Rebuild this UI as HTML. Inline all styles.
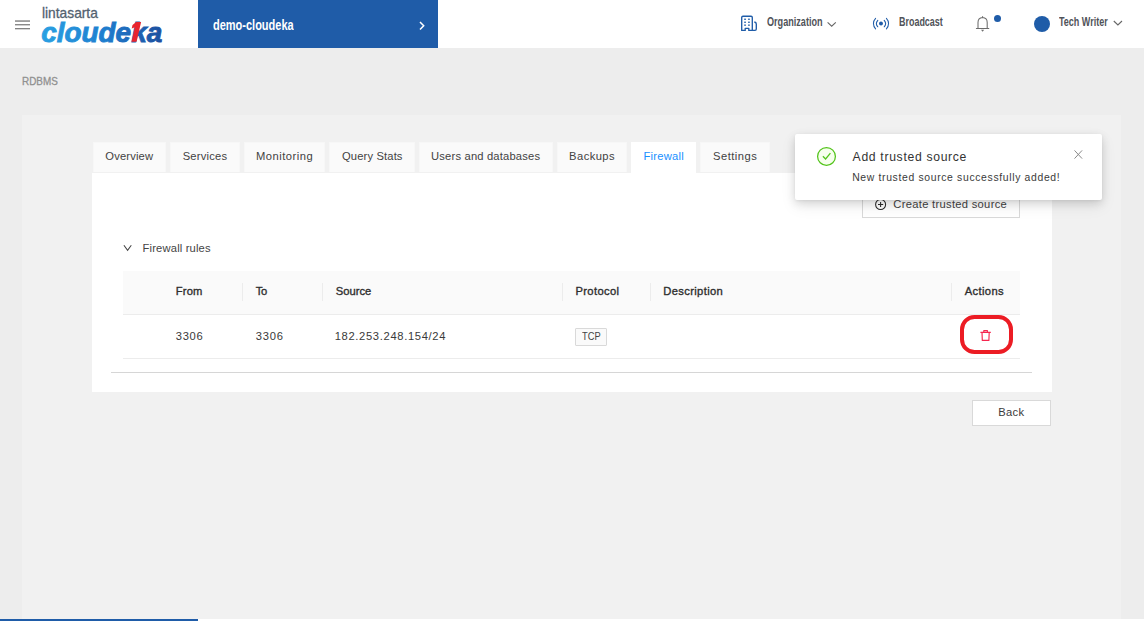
<!DOCTYPE html>
<html>
<head>
<meta charset="utf-8">
<title>RDBMS - Firewall</title>
<style>
*{box-sizing:border-box;margin:0;padding:0}
html,body{width:1144px;height:621px;overflow:hidden}
body{background:#ededed;font-family:"Liberation Sans",sans-serif;position:relative}
.abs,.t,.tab,.sep,svg{position:absolute}
.t{white-space:nowrap;font-family:"Liberation Sans",sans-serif}
#header{left:0;top:0;width:1144px;height:48px;background:#fff}
#proj{left:198px;top:0;width:240px;height:48px;background:#1f5ca8}
#panel{left:22px;top:115px;width:1099px;height:504px;background:#f1f1f1}
#card{left:92px;top:173px;width:960px;height:219px;background:#fff}
.tab{top:142px;height:30px;background:#fafafa;border:1px solid #f7f7f7;border-bottom:none}
.tab.active{background:#fff;height:31px;border-color:#fff}
#thead{left:123px;top:271px;width:897px;height:43px;background:#fafafa}
#theadline{left:123px;top:314px;width:897px;height:1px;background:#ececec}
.sep{top:283px;width:1px;height:18px;background:#ececec}
#rowline{left:123px;top:358px;width:897px;height:1px;background:#ececec}
#hr{left:111px;top:372px;width:921px;height:1px;background:#d6d6d6}
#toast{left:795px;top:134px;width:307px;height:66px;background:#fff;border-radius:2px;box-shadow:0 3px 10px rgba(0,0,0,.12),0 6px 16px rgba(0,0,0,.08),0 1px 3px rgba(0,0,0,.05)}
</style>
</head>
<body>
<div id="header" class="abs"></div>
<svg style="left:14px;top:18px" width="18" height="14" viewBox="0 0 18 14"><g fill="#757575"><rect x="1" y="2.4" width="15" height="1.3"/><rect x="1" y="6.15" width="15" height="1.2"/><rect x="1" y="10.1" width="15" height="1.2"/></g></svg>

<svg id="logo" style="left:36px;top:18px" width="134" height="28" viewBox="36 18 134 28">
<defs><linearGradient id="lg" gradientUnits="userSpaceOnUse" x1="42" y1="0" x2="162" y2="0"><stop offset="0" stop-color="#2aa0e2"/><stop offset=".5" stop-color="#1f7fd0"/><stop offset="1" stop-color="#1d4f9f"/></linearGradient></defs>
<text x="41.2" y="41.5" font-family="Liberation Sans, sans-serif" font-size="28.2" font-weight="bold" font-style="italic" fill="url(#lg)" stroke="url(#lg)" stroke-width=".9" textLength="121" lengthAdjust="spacingAndGlyphs">cloudeka</text>
<path d="M136.3 22 H141.1 L136.6 41.7 H131.6 L134.9 27.2 L131.7 28.6 L132.5 25 Z" fill="#e8242e"/>
</svg>

<div id="proj" class="abs"></div>
<svg style="left:416px;top:19px" width="12" height="14" viewBox="0 0 12 14"><path d="M4 3 L7.7 6.8 L4 10.6" fill="none" stroke="#fff" stroke-width="1.5"/></svg>

<!-- organization icon -->
<svg style="left:739px;top:13px" width="20" height="20" viewBox="739 13 20 20"><g fill="none" stroke="#1f5ca8" stroke-width="1.35" stroke-linejoin="round"><path d="M741.7 30.4 V17.6 Q741.7 16.3 743 16.3 H751 Q752.3 16.3 752.3 17.6 V30.4 H748.8 V28.4 H745.2 V30.4 Z"/><path d="M752.3 30.4 H755 Q756.3 30.4 756.3 29.1 V24 Q756.3 22.3 754.3 22"/></g><g fill="#1f5ca8"><rect x="744.2" y="18.6" width="1.7" height="1.3"/><rect x="748.1" y="18.6" width="1.7" height="1.3"/><rect x="744.2" y="21.6" width="1.7" height="1.3"/><rect x="748.1" y="21.6" width="1.7" height="1.3"/><rect x="744.2" y="24.5" width="1.7" height="1.3"/><rect x="748.1" y="24.5" width="1.7" height="1.3"/></g></svg>
<svg style="left:825px;top:19px" width="14" height="10" viewBox="825 19 14 10"><path d="M827.6 22.4 L831.7 26.2 L835.8 22.4" fill="none" stroke="#666" stroke-width="1.1"/></svg>

<!-- broadcast icon -->
<svg style="left:870px;top:14px" width="22" height="20" viewBox="870 14 22 20"><g fill="none" stroke="#1f5ca8" stroke-width="1.05" stroke-linecap="round"><path d="M877.8 20.3 A4.9 4.9 0 0 0 877.8 26.8"/><path d="M884.2 20.3 A4.9 4.9 0 0 1 884.2 26.8"/><path d="M875.6 18.3 A7.6 7.6 0 0 0 875.6 28.9"/><path d="M886.4 18.3 A7.6 7.6 0 0 1 886.4 28.9"/></g><circle cx="881" cy="23.55" r="1.95" fill="#1f5ca8"/></svg>

<!-- bell -->
<svg style="left:973px;top:13px" width="20" height="22" viewBox="973 13 20 22"><g fill="none" stroke="#6c6c6c" stroke-width="1.05" stroke-linejoin="round" stroke-linecap="round"><path d="M976.4 28.5 H988.8 M978 28.5 V22.5 Q978 18 982.6 17.6 Q987.2 18 987.2 22.5 V28.5 M982.6 17.5 V16.4"/></g><path d="M981 29.8 H984.2 L982.6 31.7 Z" fill="#707070"/></svg>
<div class="abs" style="left:994px;top:15px;width:7.4px;height:7.4px;border-radius:50%;background:#1f5ca8"></div>
<div class="abs" style="left:1034.4px;top:15.7px;width:16.1px;height:16.1px;border-radius:50%;background:#1f5ca8"></div>
<svg style="left:1111px;top:18px" width="14" height="10" viewBox="1111 18 14 10"><path d="M1113.8 21 L1117.9 24.9 L1122 21" fill="none" stroke="#666" stroke-width="1.1"/></svg>

<div id="panel" class="abs"></div>
<div id="card" class="abs"></div>
<div class="tab" style="left:93px;width:73px"></div>
<div class="tab" style="left:170px;width:70px"></div>
<div class="tab" style="left:244px;width:81px"></div>
<div class="tab" style="left:329px;width:86px"></div>
<div class="tab" style="left:419px;width:134px"></div>
<div class="tab" style="left:557px;width:70px"></div>
<div class="tab active" style="left:631px;width:65px"></div>
<div class="tab" style="left:700px;width:70px"></div>

<div class="abs" style="left:862px;top:190px;width:158px;height:28px;border:1px solid #d9d9d9;background:#fff"></div>
<svg style="left:873px;top:197px" width="16" height="16" viewBox="873 197 16 16"><circle cx="880.6" cy="204.5" r="5" fill="none" stroke="#2a2a2a" stroke-width="1.05"/><path d="M878 204.5 H883.2 M880.6 201.9 V207.1" stroke="#2a2a2a" stroke-width="1.05" fill="none"/></svg>

<svg style="left:120px;top:242px" width="16" height="12" viewBox="120 242 16 12"><path d="M123.9 245.3 L127.6 250.4 L131.3 245.3" fill="none" stroke="#444" stroke-width="1.05"/></svg>

<div id="thead" class="abs"></div>
<div id="theadline" class="abs"></div>
<div class="sep" style="left:242px"></div>
<div class="sep" style="left:322px"></div>
<div class="sep" style="left:562px"></div>
<div class="sep" style="left:650px"></div>
<div class="sep" style="left:951px"></div>

<div class="abs" style="left:575px;top:328px;width:32px;height:18px;border:1px solid #d9d9d9;background:#fafafa;border-radius:1px"></div>
<div id="rowline" class="abs"></div>
<div id="hr" class="abs"></div>

<div class="abs" style="left:959.9px;top:314.7px;width:53.4px;height:39.4px;border:4.9px solid #ec1c24;border-radius:14.5px"></div>
<svg style="left:978px;top:328px" width="16" height="16" viewBox="978 328 16 16"><g fill="none" stroke="#f5264f" stroke-width="1.15" stroke-linejoin="round"><path d="M980.4 332.3 H990.8 M982 332.3 L982.3 340.4 H988.9 L989.2 332.3 M983.8 332 V330.6 H987.4 V332"/></g></svg>

<div class="abs" style="left:972px;top:400px;width:79px;height:26px;border:1px solid #d9d9d9;background:#fff"></div>

<div id="toast" class="abs"></div>
<svg style="left:815px;top:145px" width="24" height="24" viewBox="815 145 24 24"><circle cx="826.5" cy="156.4" r="8.9" fill="#f6ffed" stroke="#52c41a" stroke-width="1.25"/><path d="M822.9 156.2 L825.6 159 L830.4 153.2" fill="none" stroke="#52c41a" stroke-width="1.25"/></svg>
<svg style="left:1072px;top:148px" width="14" height="14" viewBox="1072 148 14 14"><path d="M1074.5 150.4 L1082.1 158.6 M1082.1 150.4 L1074.5 158.6" stroke="#8a8a8a" stroke-width="1" fill="none"/></svg>

<div class="t" style="left:212.8px;top:11.0px;font-size:14px;line-height:28px;font-weight:bold;color:#fff;transform:scaleX(0.7854);transform-origin:0 50%;">demo-cloudeka</div>
<div class="t" style="left:766.7px;top:9.9px;font-size:12px;line-height:24px;font-weight:bold;color:#505359;transform:scaleX(0.7575);transform-origin:0 50%;">Organization</div>
<div class="t" style="left:899.3px;top:9.9px;font-size:12px;line-height:24px;font-weight:bold;color:#505359;transform:scaleX(0.7458);transform-origin:0 50%;">Broadcast</div>
<div class="t" style="left:1058.9px;top:9.9px;font-size:12px;line-height:24px;font-weight:bold;color:#505359;transform:scaleX(0.7508);transform-origin:0 50%;">Tech Writer</div>
<div class="t" style="left:22.3px;top:70.0px;font-size:11px;line-height:22px;font-weight:normal;color:#909090;transform:scaleX(0.9000);transform-origin:0 50%;-webkit-text-stroke:.3px currentColor;">RDBMS</div>
<div class="t" style="left:42.0px;top:-1.2px;font-size:14.5px;line-height:29px;font-weight:normal;color:#52616f;transform:scaleX(0.9492);transform-origin:0 50%;-webkit-text-stroke:.3px currentColor;">lintasarta</div>
<div class="t" style="left:105.3px;top:145.3px;font-size:11.2px;line-height:22px;font-weight:normal;color:#424242;letter-spacing:0.157px;">Overview</div>
<div class="t" style="left:182.7px;top:145.3px;font-size:11.2px;line-height:22px;font-weight:normal;color:#424242;letter-spacing:0.214px;">Services</div>
<div class="t" style="left:256.0px;top:145.3px;font-size:11.2px;line-height:22px;font-weight:normal;color:#424242;letter-spacing:0.500px;">Monitoring</div>
<div class="t" style="left:342.0px;top:145.3px;font-size:11.2px;line-height:22px;font-weight:normal;color:#424242;letter-spacing:0.140px;">Query Stats</div>
<div class="t" style="left:431.1px;top:145.3px;font-size:11.2px;line-height:22px;font-weight:normal;color:#424242;letter-spacing:0.178px;">Users and databases</div>
<div class="t" style="left:569.1px;top:145.3px;font-size:11.2px;line-height:22px;font-weight:normal;color:#424242;letter-spacing:0.433px;">Backups</div>
<div class="t" style="left:643.4px;top:145.3px;font-size:11.2px;line-height:22px;font-weight:normal;color:#1890ff;letter-spacing:0.271px;">Firewall</div>
<div class="t" style="left:713.0px;top:145.3px;font-size:11.2px;line-height:22px;font-weight:normal;color:#424242;letter-spacing:0.471px;">Settings</div>
<div class="t" style="left:893.3px;top:193.4px;font-size:11.2px;line-height:22px;font-weight:normal;color:#3a3a3a;letter-spacing:0.295px;">Create trusted source</div>
<div class="t" style="left:142.6px;top:237.0px;font-size:11.2px;line-height:22px;font-weight:normal;color:#444;letter-spacing:0.162px;">Firewall rules</div>
<div class="t" style="left:175.7px;top:280.0px;font-size:11.2px;line-height:22px;font-weight:normal;color:#2e2e2e;letter-spacing:0.200px;-webkit-text-stroke:.34px currentColor;">From</div>
<div class="t" style="left:255.8px;top:280.0px;font-size:11.2px;line-height:22px;font-weight:normal;color:#2e2e2e;letter-spacing:-0.500px;-webkit-text-stroke:.34px currentColor;">To</div>
<div class="t" style="left:335.7px;top:280.0px;font-size:11.2px;line-height:22px;font-weight:normal;color:#2e2e2e;letter-spacing:0.040px;-webkit-text-stroke:.34px currentColor;">Source</div>
<div class="t" style="left:575.5px;top:280.0px;font-size:11.2px;line-height:22px;font-weight:normal;color:#2e2e2e;letter-spacing:0.343px;-webkit-text-stroke:.34px currentColor;">Protocol</div>
<div class="t" style="left:663.3px;top:280.0px;font-size:11.2px;line-height:22px;font-weight:normal;color:#2e2e2e;letter-spacing:0.350px;-webkit-text-stroke:.34px currentColor;">Description</div>
<div class="t" style="left:964.7px;top:280.0px;font-size:11.2px;line-height:22px;font-weight:normal;color:#2e2e2e;letter-spacing:0.367px;-webkit-text-stroke:.34px currentColor;">Actions</div>
<div class="t" style="left:175.7px;top:324.9px;font-size:11.2px;line-height:22px;font-weight:normal;color:#3a3a3a;letter-spacing:0.733px;">3306</div>
<div class="t" style="left:255.8px;top:324.9px;font-size:11.2px;line-height:22px;font-weight:normal;color:#3a3a3a;letter-spacing:0.733px;">3306</div>
<div class="t" style="left:334.7px;top:324.9px;font-size:11.2px;line-height:22px;font-weight:normal;color:#3a3a3a;letter-spacing:0.659px;">182.253.248.154/24</div>
<div class="t" style="left:582.1px;top:326.9px;font-size:10.4px;line-height:20px;font-weight:normal;color:#444;transform:scaleX(0.8950);transform-origin:0 50%;">TCP</div>
<div class="t" style="left:998.3px;top:401.2px;font-size:11.2px;line-height:22px;font-weight:normal;color:#3a3a3a;letter-spacing:0.267px;">Back</div>
<div class="t" style="left:852.6px;top:145.0px;font-size:12.2px;line-height:24px;font-weight:normal;color:#333;letter-spacing:0.676px;">Add trusted source</div>
<div class="t" style="left:852.2px;top:168.2px;font-size:10.4px;line-height:20px;font-weight:normal;color:#3a3a3a;letter-spacing:0.659px;">New trusted source successfully added!</div>

<div class="abs" style="left:0;top:619px;width:198px;height:2px;background:#1f5ca8"></div>
<div class="abs" style="left:198px;top:619px;width:946px;height:2px;background:#fff"></div>
</body>
</html>
